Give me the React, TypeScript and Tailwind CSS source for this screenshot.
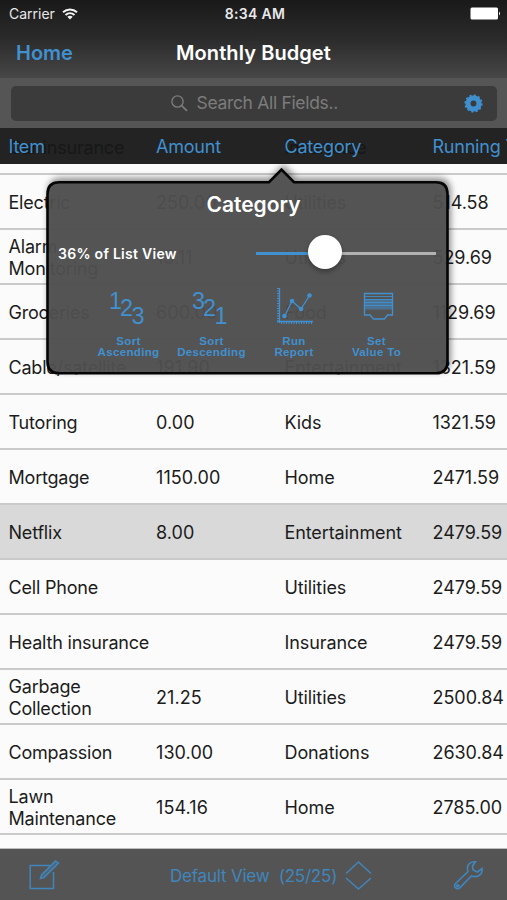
import type { ReactNode } from "react";

type Row = { item: string; amount: string; category: string; running: string; selected?: boolean };

const rows: Row[] = [
  { item: "Electric", amount: "250.00", category: "Utilities", running: "514.58" },
  { item: "Alarm\nMonitoring", amount: "15.11", category: "Utilities", running: "529.69" },
  { item: "Groceries", amount: "600.00", category: "Food", running: "1129.69" },
  { item: "Cable/satellite", amount: "191.90", category: "Entertainment", running: "1321.59" },
  { item: "Tutoring", amount: "0.00", category: "Kids", running: "1321.59" },
  { item: "Mortgage", amount: "1150.00", category: "Home", running: "2471.59" },
  { item: "Netflix", amount: "8.00", category: "Entertainment", running: "2479.59", selected: true },
  { item: "Cell Phone", amount: "", category: "Utilities", running: "2479.59" },
  { item: "Health insurance", amount: "", category: "Insurance", running: "2479.59" },
  { item: "Garbage\nCollection", amount: "21.25", category: "Utilities", running: "2500.84" },
  { item: "Compassion", amount: "130.00", category: "Donations", running: "2630.84" },
  { item: "Lawn\nMaintenance", amount: "154.16", category: "Home", running: "2785.00" },
];

function StatusBar() {
  return (
    <div className="grid h-[27px] grid-cols-3 items-center pl-[9px] pr-[6px] text-[#e8e8e8]">
      <div className="flex items-center gap-[7px]">
        <span className="text-[14px]">Carrier</span>
        <svg width="16" height="12" viewBox="0 0 16 12" fill="none" stroke="#f2f2f2" strokeWidth="2">
          <path d="M1 4.3C5 .5 11 .5 15 4.3" />
          <path d="M3.5 7C6.2 4.5 9.8 4.5 12.5 7" />
          <path d="M8 11.5 5.3 8.8C6.8 7.4 9.2 7.4 10.7 8.8Z" fill="#f2f2f2" stroke="none" />
        </svg>
      </div>
      <span className="text-center text-[14px] font-semibold tracking-[0.3px]">8:34 AM</span>
      <svg className="justify-self-end" width="31" height="13" viewBox="0 0 31 13" fill="#fff">
        <rect x="0.5" y="0.5" width="27.5" height="12" rx="1.5" />
        <path d="M29 4.5Q31 6.5 29 8.5Z" />
      </svg>
    </div>
  );
}

function NavBar() {
  return (
    <div className="grid h-[51px] grid-cols-[1fr_auto_1fr] items-center px-4 text-[20px] font-semibold">
      <span className="text-[#4190cf]">Home</span>
      <span className="tracking-[0.08px] text-white">Monthly Budget</span>
      <span />
    </div>
  );
}

function SearchBar() {
  return (
    <div className="h-[50px] bg-[#555] px-[10.5px] pt-2">
      <div className="flex h-[35px] items-center rounded-[5px] bg-[#3b3b3b] pl-[160px] pr-[14px] text-[#7c7c7c]">
        <svg width="17" height="17" viewBox="0 0 17 17" fill="none" stroke="currentColor" strokeWidth="1.4">
          <circle cx="6.5" cy="6.5" r="5.6" />
          <path d="m10.6 10.6 5.4 5.2" strokeWidth="1.8" />
        </svg>
        <span className="ml-[9px] flex-1 whitespace-nowrap text-[17.5px] tracking-[-0.32px]">Search All Fields..</span>
        <svg width="19" height="19" viewBox="-10 -10 20 20">
          <circle r="5.800" fill="none" stroke="#3f8fcf" strokeWidth="5.400" />
          <circle r="8.8" fill="none" stroke="#3f8fcf" strokeWidth="1.6" strokeDasharray="2.3 2.3" />
        </svg>
      </div>
    </div>
  );
}

function HeaderCell({ label, under }: { label: string; under?: string }) {
  return (
    <div className="relative">
      {under && <span className="absolute left-0 top-[1px] text-[#171717]">{under}</span>}
      <span className="relative">{label}</span>
    </div>
  );
}

function ColumnHeader() {
  return (
    <div className="grid h-9 grid-cols-[147.5px_128.5px_148px_90px] items-center whitespace-nowrap bg-[#232323] pl-[8.5px] text-[18px] tracking-[-0.22px] text-[#4190cf]">
      <HeaderCell label="Item" under="Car insurance" />
      <HeaderCell label="Amount" />
      <HeaderCell label="Category" under="Insurance" />
      <HeaderCell label="Running Total" />
    </div>
  );
}

function BudgetRow({ row }: { row: Row }) {
  return (
    <div
      className={
        "grid h-[55px] grid-cols-[147.5px_128.5px_148px_74px] items-center whitespace-pre border-b-2 border-[#cacaca] pl-[8.5px] pt-[2px] text-[18px] leading-[21.5px] tracking-[-0.2px] text-[#1c1c1c] " +
        (row.selected ? "bg-[#d9d9d9]" : "bg-[#fbfbfb]")
      }
    >
      <span>{row.item}</span>
      <span className="tracking-[0.08px]">{row.amount}</span>
      <span className="tracking-[-0.1px]">{row.category}</span>
      <span className="tracking-[-0.05px]">{row.running}</span>
    </div>
  );
}

function Action({ first, second, children }: { first: string; second: string; children: ReactNode }) {
  return (
    <div className="flex flex-col items-center">
      <svg className="overflow-visible" width="40" height="40" viewBox="0 0 40 40" fill="none" stroke="#4190cf" strokeWidth="1.3">
        {children}
      </svg>
      <div className="mt-[12px] whitespace-nowrap text-center font-['Liberation_Sans',Arial,sans-serif] text-[11.5px] font-bold leading-[11px] tracking-[0.35px] text-[#4190cf]">
        {first}
        <br />
        {second}
      </div>
    </div>
  );
}

function StepNumbers({ digits }: { digits: string[] }) {
  return (
    <g fill="#4190cf" stroke="none" fontSize="23.5" fontFamily="Liberation Sans, Arial, sans-serif">
      <text x="0" y="25">{digits[0]}</text>
      <text x="11" y="32">{digits[1]}</text>
      <text x="22.5" y="39.5">{digits[2]}</text>
    </g>
  );
}

function CategoryPopover() {
  return (
    <div className="absolute left-[46px] top-[168px] h-[207px] w-[403px]">
      <svg className="absolute inset-0 overflow-visible drop-shadow-[2px_-3px_3px_rgba(0,0,0,0.45)]" width="403" height="207">
        <path
          d="M12 14.2H223L235.5 1.5L248 14.2H390Q401.5 14.2 401.5 26V193.500Q401.500 205.300 390 205.300H13Q1.500 205.300 1.500 193.500V26Q1.500 14.200 13 14.200Z"
          fill="#505050"
          fillOpacity="0.95"
          stroke="#050505"
          strokeWidth="2.6"
        />
      </svg>
      <div className="relative pt-[23px]">
        <h2 className="pl-[12px] text-center text-[21px] font-semibold leading-7 text-white">Category</h2>
        <div className="mt-[16px] flex h-[36px] items-center pl-3 pr-[13px]">
          <span className="w-[198px] whitespace-nowrap text-[14px] font-semibold tracking-[0.28px] text-white">36% of List View</span>
          <div className="relative flex h-[3px] flex-1">
            <div className="w-[36%] bg-[#4190cf]" />
            <div className="flex-1 bg-[#b2b2b2]" />
            <div className="absolute left-[52px] top-[-17px] size-[34px] rounded-full bg-white shadow-[0_3px_5px_rgba(0,0,0,0.3)]" />
          </div>
        </div>
        <div className="mt-[13px] grid grid-cols-[83px_83px_82px_83px] pl-[41px]">
          <Action first="Sort" second="Ascending">
            <StepNumbers digits={["1", "2", "3"]} />
          </Action>
          <Action first="Sort" second="Descending">
            <StepNumbers digits={["3", "2", "1"]} />
          </Action>
          <Action first="Run" second="Report">
            <path d="M5.500 4V39M3 37.500H39" />
            <path d="M4 4V37M7 39H39" strokeWidth="2" strokeDasharray="1 1.5" />
            <path d="M10.500 32.500 18 17 27 25 35.500 11.500" />
            <g fill="#4190cf" stroke="none">
              <circle cx="10.500" cy="32" r="2.300" />
              <circle cx="18" cy="17" r="2.300" />
              <circle cx="27" cy="25" r="2.300" />
              <circle cx="35.500" cy="11.500" r="2.300" />
            </g>
          </Action>
          <Action first="Set" second="Value To">
            <rect x="8" y="15" width="27" height="10.500" fill="#4190cf" fillOpacity="0.5" stroke="none" />
            <path d="M7.500 9.500H35.500V31H30.500L27.500 35H16.500L13 31H7.500Z" />
            <path d="M8 12.500H35M8 15.500H35M8 18.500H35M8 21.500H35" strokeWidth="0.900" />
          </Action>
        </div>
      </div>
    </div>
  );
}

function Toolbar() {
  return (
    <div className="absolute inset-x-0 bottom-0 flex h-[52px] items-center border-t border-[#bdbdbd] bg-[#545454] pl-[29px] pr-[23px] pt-[2px] text-[#4086bd]">
      <svg width="31" height="31" viewBox="0 0 31 31" fill="none" stroke="currentColor" strokeWidth="1.500">
        <path d="M24.500 12V28.500H1.200V5.500H21" />
        <path d="M11.500 18.500 12.500 15 26.500 1 29.500 3 15 17.500Z" fill="currentColor" fillOpacity="0.4" />
      </svg>
      <span className="ml-[110px] whitespace-pre pt-[2px] text-[17px] tracking-[-0.2px]">Default View  (25/25)</span>
      <svg className="ml-[8px]" width="27" height="29" viewBox="0 0 27 29" fill="none" stroke="currentColor" strokeWidth="1.400">
        <path d="M1 12.500 13.500 1 26 12.500M1 17 13.500 28 26 17" />
      </svg>
      <svg className="ml-auto" width="31" height="31" viewBox="0 0 31 31" fill="none" stroke="currentColor" strokeWidth="1.600">
        <path d="M22.500 1.800C17 1 13 5.500 15 11.500L2.500 23.500C0 26 3.500 30.500 6.800 27.800L18.500 16C24.500 18 30 14.500 29 8.500L24.500 12 20 10 19.500 6Z" />
        <circle cx="4.800" cy="25.800" r="1" />
      </svg>
    </div>
  );
}

export default function App() {
  return (
    <main className="relative h-[900px] w-[507px] overflow-hidden bg-[#fbfbfb] font-[Inter,'Liberation_Sans',sans-serif]">
      <header>
        <div className="bg-linear-to-b from-[#191919] via-[#2b2b2b] to-[#474747]">
          <StatusBar />
          <NavBar />
        </div>
        <SearchBar />
        <ColumnHeader />
      </header>
      <section>
        <div className="h-[11px] border-b-2 border-[#cacaca]" />
        {rows.map((row, i) => (
          <BudgetRow key={i} row={row} />
        ))}
      </section>
      <CategoryPopover />
      <Toolbar />
    </main>
  );
}
